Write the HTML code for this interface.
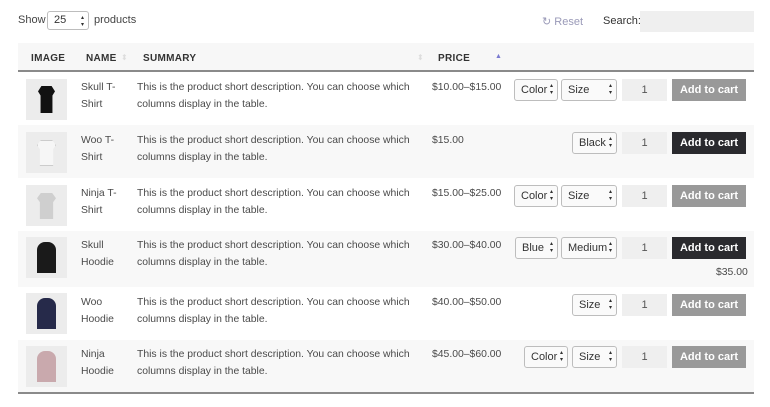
<!DOCTYPE html>
<html><head><meta charset="utf-8"><style>
*{box-sizing:border-box;margin:0;padding:0}
body{width:770px;height:407px;background:#fff;font-family:"Liberation Sans",sans-serif;font-size:11px;color:#444;position:relative;overflow:hidden}
.a{position:absolute}
.hd{left:18px;top:43px;width:736px;height:29px;background:#f7f7f7;border-bottom:2px solid #8a8a8a}
.th{position:absolute;top:53px;font-weight:bold;font-size:10px;color:#333;letter-spacing:.3px}
.row{position:absolute;left:18px;width:736px}
.g{background:#f8f8f8}
.th2{position:absolute;left:26px;width:41px;height:41px;background:#ececec}
.t{position:absolute;line-height:17px;color:#4a4a4a;font-size:10.4px}
.sel{position:absolute;height:22px;border:1px solid #bdbdbd;border-radius:3px;background:#fafafa;font-size:11px;line-height:20px;padding-left:6px;color:#333}
.sel:after{content:"\25B4\A\25BE";white-space:pre;position:absolute;right:4px;top:3px;font-size:6px;line-height:7px;color:#333}
.q{position:absolute;left:622px;width:45px;height:22px;background:#efefef;text-align:center;line-height:22px;color:#555}
.btn{position:absolute;left:672px;width:74px;height:22px;background:#999;color:#fff;font-weight:bold;text-align:center;line-height:22px;font-size:11px}
.dk{background:#2a2a2e}
</style></head><body>
<div class="a" style="left:18px;top:14px">Show</div>
<div class="sel" style="left:47px;top:11px;width:42px;height:19px;line-height:17px;background:#fff">25</div>
<div class="a" style="left:94px;top:14px">products</div>
<div class="a" style="left:542px;top:15px;color:#9a9ab8">↻ Reset</div>
<div class="a" style="left:603px;top:15px;color:#333">Search:</div>
<div class="a" style="left:640px;top:11px;width:114px;height:21px;background:#efefef"></div>

<div class="a hd"></div>
<div class="th" style="left:31px">IMAGE</div>
<div class="th" style="left:86px">NAME</div>
<div class="a" style="left:121px;top:53px;color:#ddd;font-size:8px">⬍</div>
<div class="th" style="left:143px">SUMMARY</div>
<div class="a" style="left:417px;top:53px;color:#ddd;font-size:8px">⬍</div>
<div class="th" style="left:438px">PRICE</div>
<div class="a" style="left:495px;top:53px;color:#7a7ad0;font-size:7px">▲</div>

<div class="row g" style="top:125px;height:53px"></div>
<div class="row g" style="top:231px;height:56px"></div>
<div class="row g" style="top:340px;height:52px"></div>
<div class="a" style="left:18px;top:392px;width:736px;height:2px;background:#8a8a8a"></div>

<!-- row1 -->
<div class="th2" style="top:79px"><div style="position:absolute;left:12px;top:7px;width:17px;height:27px;background:#111;clip-path:polygon(20% 0,80% 0,100% 20%,85% 35%,85% 100%,15% 100%,15% 35%,0 20%)"></div></div>
<div class="t" style="left:81px;top:79px">Skull T-<br>Shirt</div>
<div class="t" style="left:137px;top:79px">This is the product short description. You can choose which<br>columns display in the table.</div>
<div class="t" style="left:432px;top:79px">$10.00–$15.00</div>
<div class="sel" style="left:514px;top:79px;width:44px">Color</div>
<div class="sel" style="left:561px;top:79px;width:56px">Size</div>
<div class="q" style="top:79px">1</div>
<div class="btn" style="top:79px">Add to cart</div>

<!-- row2 -->
<div class="th2" style="top:132px"><div style="position:absolute;left:11px;top:8px;width:19px;height:26px;background:#f6f6f6;border:1px solid #ccc;clip-path:polygon(20% 0,80% 0,100% 20%,85% 35%,85% 100%,15% 100%,15% 35%,0 20%)"></div></div>
<div class="t" style="left:81px;top:132px">Woo T-<br>Shirt</div>
<div class="t" style="left:137px;top:132px">This is the product short description. You can choose which<br>columns display in the table.</div>
<div class="t" style="left:432px;top:132px">$15.00</div>
<div class="sel" style="left:572px;top:132px;width:45px">Black</div>
<div class="q" style="top:132px">1</div>
<div class="btn dk" style="top:132px">Add to cart</div>

<!-- row3 -->
<div class="th2" style="top:185px"><div style="position:absolute;left:11px;top:8px;width:19px;height:26px;background:#cfcfcf;clip-path:polygon(20% 0,80% 0,100% 20%,85% 35%,85% 100%,15% 100%,15% 35%,0 20%)"></div></div>
<div class="t" style="left:81px;top:185px">Ninja T-<br>Shirt</div>
<div class="t" style="left:137px;top:185px">This is the product short description. You can choose which<br>columns display in the table.</div>
<div class="t" style="left:432px;top:185px">$15.00–$25.00</div>
<div class="sel" style="left:514px;top:185px;width:44px">Color</div>
<div class="sel" style="left:561px;top:185px;width:56px">Size</div>
<div class="q" style="top:185px">1</div>
<div class="btn" style="top:185px">Add to cart</div>

<!-- row4 -->
<div class="th2" style="top:237px"><div style="position:absolute;left:11px;top:5px;width:19px;height:31px;background:#1a1a1a;border-radius:8px 8px 0 0"></div></div>
<div class="t" style="left:81px;top:237px">Skull<br>Hoodie</div>
<div class="t" style="left:137px;top:237px">This is the product short description. You can choose which<br>columns display in the table.</div>
<div class="t" style="left:432px;top:237px">$30.00–$40.00</div>
<div class="sel" style="left:515px;top:237px;width:43px">Blue</div>
<div class="sel" style="left:561px;top:237px;width:56px">Medium</div>
<div class="q" style="top:237px">1</div>
<div class="btn dk" style="top:237px">Add to cart</div>
<div class="t" style="left:716px;top:264px">$35.00</div>

<!-- row5 -->
<div class="th2" style="top:293px"><div style="position:absolute;left:11px;top:5px;width:19px;height:31px;background:#262a4a;border-radius:8px 8px 0 0"></div></div>
<div class="t" style="left:81px;top:294px">Woo<br>Hoodie</div>
<div class="t" style="left:137px;top:294px">This is the product short description. You can choose which<br>columns display in the table.</div>
<div class="t" style="left:432px;top:294px">$40.00–$50.00</div>
<div class="sel" style="left:572px;top:294px;width:45px">Size</div>
<div class="q" style="top:294px">1</div>
<div class="btn" style="top:294px">Add to cart</div>

<!-- row6 -->
<div class="th2" style="top:346px"><div style="position:absolute;left:11px;top:5px;width:19px;height:31px;background:#c9a9ad;border-radius:8px 8px 0 0"></div></div>
<div class="t" style="left:81px;top:346px">Ninja<br>Hoodie</div>
<div class="t" style="left:137px;top:346px">This is the product short description. You can choose which<br>columns display in the table.</div>
<div class="t" style="left:432px;top:346px">$45.00–$60.00</div>
<div class="sel" style="left:524px;top:346px;width:44px">Color</div>
<div class="sel" style="left:572px;top:346px;width:45px">Size</div>
<div class="q" style="top:346px">1</div>
<div class="btn" style="top:346px">Add to cart</div>
</body></html>
